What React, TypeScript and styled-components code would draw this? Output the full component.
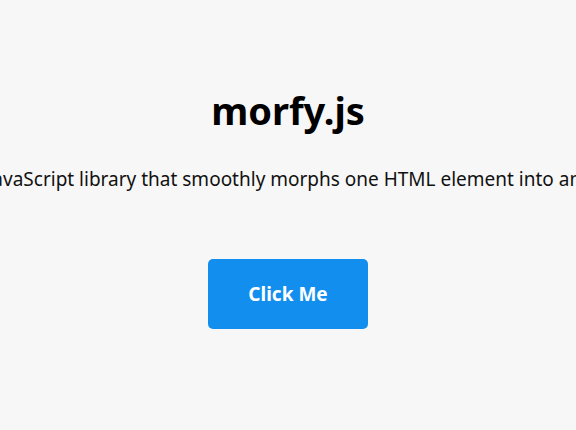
import styled, { createGlobalStyle } from 'styled-components';

const GlobalStyle = createGlobalStyle`
  html, body {
    margin: 0;
    padding: 0;
    background: #f7f7f7;
    font-family: 'Noto Sans', 'Open Sans', sans-serif;
    overflow: hidden;
  }
`;

const Page = styled.main`
  display: flex;
  flex-direction: column;
  align-items: center;
  width: 576px;
  height: 430px;
  padding-top: 84px;
  box-sizing: border-box;
`;

const Title = styled.h1`
  margin: 0;
  font-size: 38px;
  font-weight: 700;
  color: #000;
  line-height: 52px;
`;

const Tagline = styled.p`
  margin: 30px 0 0 26px;
  font-size: 19px;
  line-height: 26px;
  color: #111;
  white-space: nowrap;
`;

const MorphButton = styled.button`
  margin-top: 67px;
  width: 160px;
  height: 70px;
  border: none;
  border-radius: 5px;
  background: #128eef;
  color: #fff;
  font-family: inherit;
  font-size: 19px;
  font-weight: 700;
  cursor: pointer;
`;

export default function App() {
  return (
    <>
      <GlobalStyle />
      <Page>
        <Title>morfy.js</Title>
        <Tagline>A JavaScript library that smoothly morphs one HTML element into another.</Tagline>
        <MorphButton>Click Me</MorphButton>
      </Page>
    </>
  );
}
